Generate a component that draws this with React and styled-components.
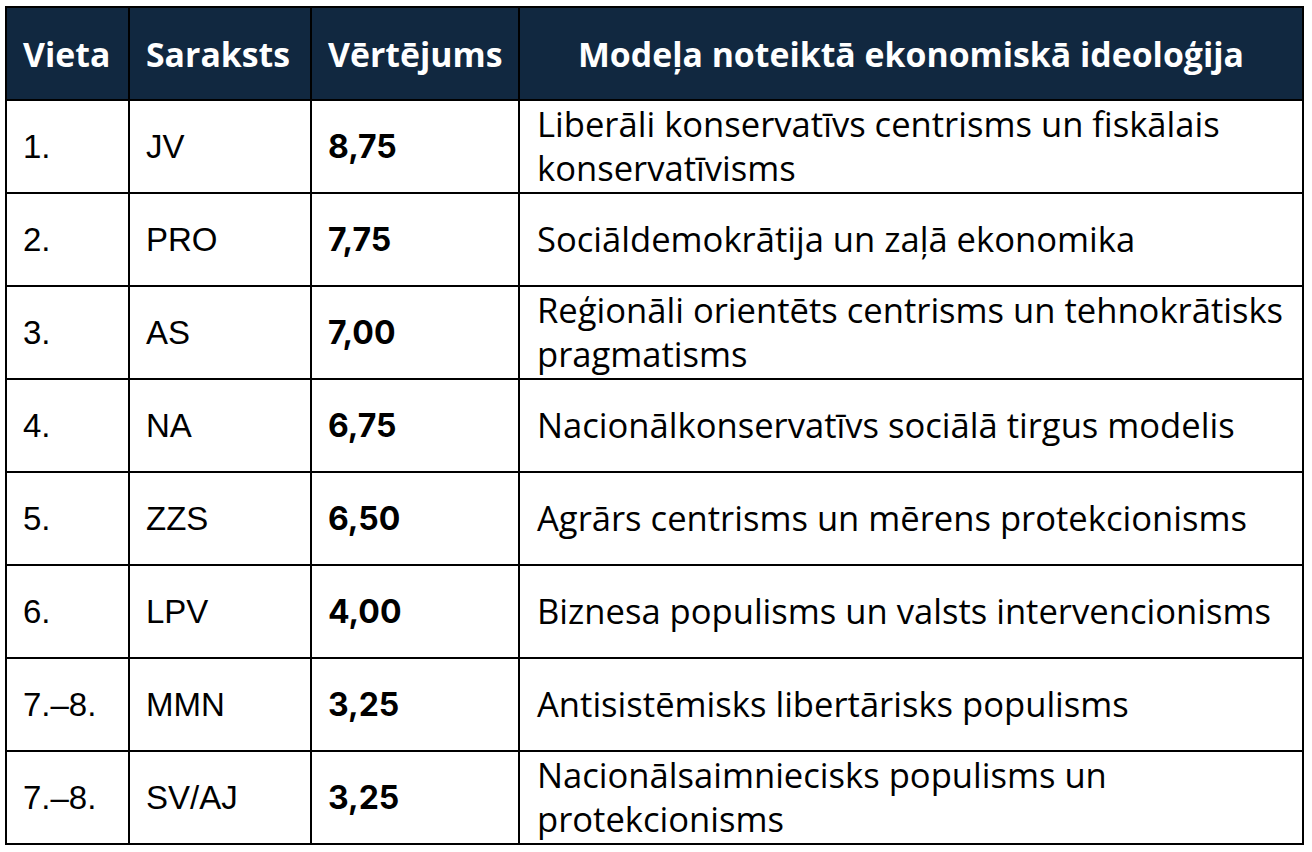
import React from 'react';
import styled, { createGlobalStyle } from 'styled-components';

const GlobalStyle = createGlobalStyle`
  html, body {
    margin: 0;
    padding: 0;
    background: #ffffff;
  }
`;

const Page = styled.div`
  padding: 6px 10px 0 5px;
`;

const Table = styled.table`
  width: 1297px;
  border-collapse: collapse;
  table-layout: fixed;
`;

const HeadCell = styled.th`
  height: 91px;
  padding: 0 16px;
  background-color: #112840;
  color: #ffffff;
  border: 2px solid #000;
  font-family: "Open Sans", "Liberation Sans", sans-serif;
  font-size: 33.8px;
  font-weight: 700;
  text-align: ${(p) => (p.$center ? 'center' : 'left')};
  white-space: nowrap;
`;

const Row = styled.tr`
  height: 93px;
`;

const Cell = styled.td`
  padding: 0 16px;
  border: 2px solid #000;
  color: #000;
  vertical-align: middle;
  font-family: "Liberation Sans", Arial, sans-serif;
  font-size: 33px;
  line-height: 38px;
  font-weight: 400;
`;

const ScoreCell = styled(Cell)`
  font-family: Inter, "Liberation Sans", sans-serif;
  font-weight: 700;
  font-size: 32px;
`;

const IdeologyCell = styled(Cell)`
  font-family: "Open Sans", "Liberation Sans", sans-serif;
  font-size: 34.6px;
  line-height: 44px;
  padding-left: 17px;
  padding-bottom: 2px;
`;

const rows = [
  { place: '1.', list: 'JV', score: '8,75', ideology: 'Liberāli konservatīvs centrisms un fiskālais konservatīvisms' },
  { place: '2.', list: 'PRO', score: '7,75', ideology: 'Sociāldemokrātija un zaļā ekonomika' },
  { place: '3.', list: 'AS', score: '7,00', ideology: 'Reģionāli orientēts centrisms un tehnokrātisks pragmatisms' },
  { place: '4.', list: 'NA', score: '6,75', ideology: 'Nacionālkonservatīvs sociālā tirgus modelis' },
  { place: '5.', list: 'ZZS', score: '6,50', ideology: 'Agrārs centrisms un mērens protekcionisms' },
  { place: '6.', list: 'LPV', score: '4,00', ideology: 'Biznesa populisms un valsts intervencionisms' },
  { place: '7.–8.', list: 'MMN', score: '3,25', ideology: 'Antisistēmisks libertārisks populisms' },
  { place: '7.–8.', list: 'SV/AJ', score: '3,25', ideology: 'Nacionālsaimniecisks populisms un protekcionisms' },
];

const App = () => {
  return (
    <Page>
      <GlobalStyle />
      <Table>
        <colgroup>
          <col style={{ width: '123px' }} />
          <col style={{ width: '182px' }} />
          <col style={{ width: '208px' }} />
          <col style={{ width: '784px' }} />
        </colgroup>
        <thead>
          <tr>
            <HeadCell>Vieta</HeadCell>
            <HeadCell>Saraksts</HeadCell>
            <HeadCell>Vērtējums</HeadCell>
            <HeadCell $center>Modeļa noteiktā ekonomiskā ideoloģija</HeadCell>
          </tr>
        </thead>
        <tbody>
          {rows.map((r) => (
            <Row key={r.list}>
              <Cell>{r.place}</Cell>
              <Cell>{r.list}</Cell>
              <ScoreCell>{r.score}</ScoreCell>
              <IdeologyCell>{r.ideology}</IdeologyCell>
            </Row>
          ))}
        </tbody>
      </Table>
    </Page>
  );
};

export default App;
